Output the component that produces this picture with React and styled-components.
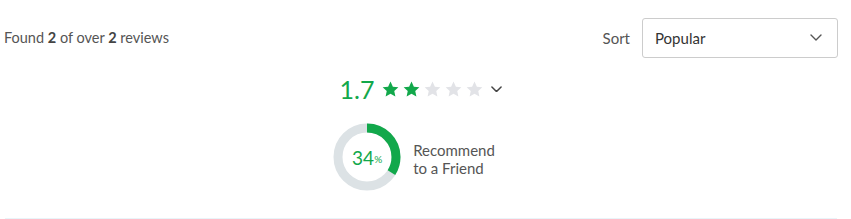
import styled, { createGlobalStyle } from "styled-components";

const GlobalStyle = createGlobalStyle`
    body {
        margin: 0;
        background: #FFFFFF;
        font-family: Lato, "Liberation Sans", sans-serif;
    }
`;

const GREEN = "#12A84B";

function Star({ filled }) {
    return (
        <svg width="17" height="16" viewBox="0 0 24 23">
            <path
                d="M12 0.8l3.4 7.3 7.9 0.9-5.9 5.4 1.6 7.9L12 18.3l-7 4 1.6-7.9L0.7 9l7.9-0.9z"
                fill={filled ? GREEN : "#E2E3E7"}
            />
        </svg>
    );
}

function Chevron({ size = 12, color = "#555", weight = 1.6 }) {
    return (
        <svg width={size} height={size * 0.6} viewBox="0 0 12 7" fill="none">
            <path d="M1 1l5 5 5-5" stroke={color} strokeWidth={weight} strokeLinecap="round" strokeLinejoin="round" />
        </svg>
    );
}

function Ring({ percent }) {
    const r = 29;
    const c = 2 * Math.PI * r;
    return (
        <RingBox>
            <svg width="68" height="68" viewBox="0 0 68 68">
                <circle cx="34" cy="34" r={r} fill="none" stroke="#DCE2E5" strokeWidth="9" />
                <circle
                    cx="34"
                    cy="34"
                    r={r}
                    fill="none"
                    stroke={GREEN}
                    strokeWidth="9"
                    strokeDasharray={`${(c * percent) / 100} ${c}`}
                    transform="rotate(-90 34 34)"
                />
            </svg>
            <RingLabel>
                {percent}<small>%</small>
            </RingLabel>
        </RingBox>
    );
}

export default function App() {
    const rating = 1.7;
    const stars = [1, 2, 3, 4, 5];

    return (
        <Page>
            <GlobalStyle />
            <Toolbar>
                <Found>
                    Found <b>2</b> of over <b>2</b> reviews
                </Found>
                <SortBox>
                    <SortLabel>Sort</SortLabel>
                    <Select>
                        <span>Popular</span>
                        <Chevron size={12} color="#555" weight={1.4} />
                    </Select>
                </SortBox>
            </Toolbar>
            <Summary>
                <RatingRow>
                    <Score>{rating}</Score>
                    <Stars>
                        {stars.map((s) => (
                            <Star key={s} filled={s <= Math.round(rating)} />
                        ))}
                    </Stars>
                    <Chevron size={11} color="#444" />
                </RatingRow>
                <Recommend>
                    <Ring percent={34} />
                    <RecommendText>
                        Recommend
                        <br />
                        to a Friend
                    </RecommendText>
                </Recommend>
            </Summary>
            <Divider />
        </Page>
    );
}

const Page = styled.div`
    width: 834px;
    padding: 18px 0 0 4px;
    color: #555555;
`;

const Toolbar = styled.div`
    display: flex;
    justify-content: space-between;
    align-items: center;
`;

const Found = styled.div`
    font-size: 14.5px;
    color: #555555;
    margin-top: -2px;

    b {
        font-weight: 700;
        color: #444;
    }
`;

const SortBox = styled.div`
    display: flex;
    align-items: center;
    gap: 12px;
`;

const SortLabel = styled.span`
    font-size: 15px;
    color: #555555;
`;

const Select = styled.div`
    box-sizing: border-box;
    width: 196px;
    height: 40px;
    border: 1px solid #CCCCCC;
    border-radius: 3px;
    padding: 0 15px 0 12px;
    display: flex;
    align-items: center;
    justify-content: space-between;
    font-size: 15px;
    color: #333;
`;

const Summary = styled.div`
    display: flex;
    flex-direction: column;
    align-items: center;
`;

const RatingRow = styled.div`
    display: flex;
    align-items: center;
    margin-top: 16px;
`;

const Score = styled.span`
    font-size: 25px;
    color: ${GREEN};
    margin-right: 8px;
    line-height: 30px;
`;

const Stars = styled.div`
    display: flex;
    gap: 4px;
    margin-right: 8px;
`;

const Recommend = styled.div`
    display: flex;
    align-items: center;
    gap: 12px;
    margin-top: 19px;
    margin-right: 14px;
`;

const RingBox = styled.div`
    position: relative;
    width: 68px;
    height: 68px;

    svg {
        display: block;
    }
`;

const RingLabel = styled.div`
    position: absolute;
    inset: 0;
    display: flex;
    align-items: center;
    justify-content: center;
    font-size: 19px;
    color: ${GREEN};

    small {
        font-size: 10px;
        margin-top: 4px;
    }
`;

const RecommendText = styled.div`
    font-size: 15px;
    line-height: 18px;
    color: #555555;
    margin-top: 4px;
`;

const Divider = styled.div`
    height: 1px;
    background: #E9F4F9;
    margin-top: 27px;
    width: 832px;
    margin-left: 1px;
`;
